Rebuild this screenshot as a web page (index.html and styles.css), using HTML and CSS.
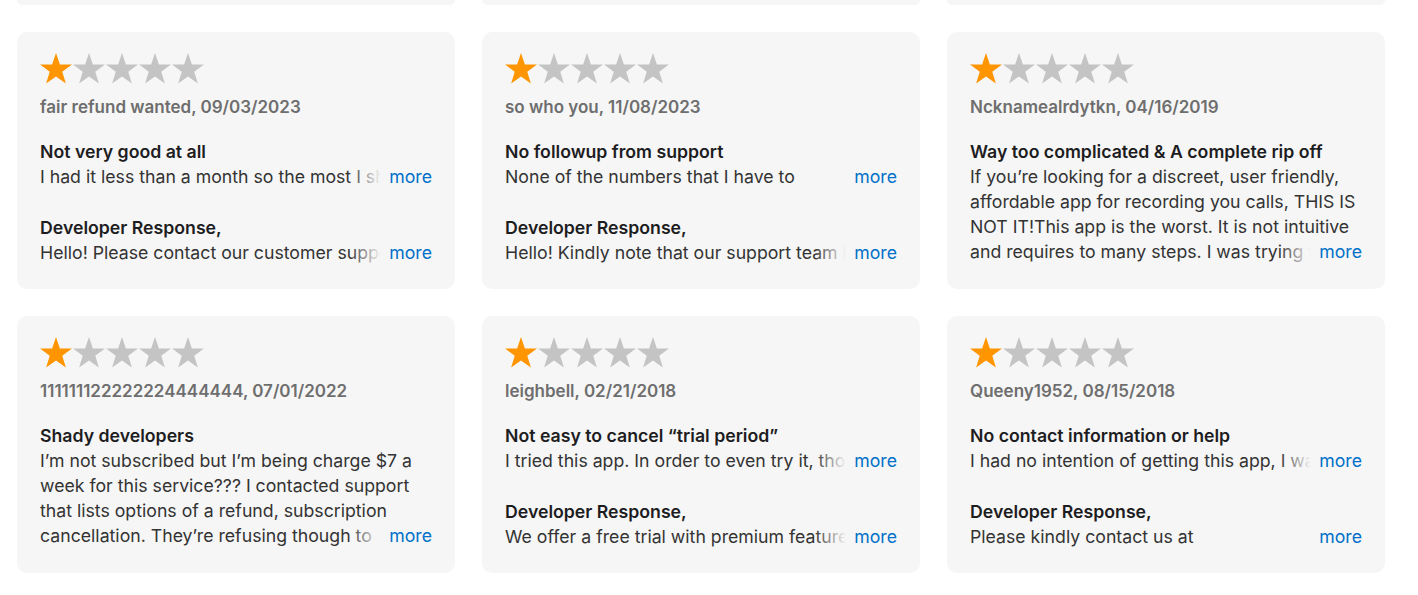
FILE: index.html
```html
<!DOCTYPE html>
<html lang="en">
<head>
<meta charset="utf-8">
<title>Ratings and Reviews</title>
<link rel="stylesheet" href="styles.css">
</head>
<body>
<svg class="defs" width="0" height="0" aria-hidden="true">
  <defs>
    <symbol id="star" viewBox="0 0 32 31">
      <polygon points="16,0 19.88,11.46 31.98,11.61 22.28,18.84 25.87,30.39 16,23.4 6.13,30.39 9.72,18.84 0.02,11.61 12.12,11.46"/>
    </symbol>
  </defs>
</svg>
<main class="reviews">
  <div class="card stub"></div>
  <div class="card stub"></div>
  <div class="card stub"></div>

  <article class="card">
    <svg class="stars" viewBox="0 0 164 31" width="164" height="31"><use href="#star" x="0" width="32" height="31" class="on"/><use href="#star" x="33" width="32" height="31" class="off"/><use href="#star" x="66" width="32" height="31" class="off"/><use href="#star" x="99" width="32" height="31" class="off"/><use href="#star" x="132" width="32" height="31" class="off"/></svg>
    <div class="author">fair refund wanted, 09/03/2023</div>
    <h3 class="title">Not very good at all</h3>
    <div class="clamp one"><p class="text">I had it less than a month so the most I should have been charged was the monthly fee, instead I was charged for the entire year.</p><span class="more">more</span></div>
    <h3 class="dev">Developer Response,</h3>
    <div class="clamp one"><p class="text">Hello! Please contact our customer support team so that we can help you with your refund request.</p><span class="more">more</span></div>
  </article>

  <article class="card">
    <svg class="stars" viewBox="0 0 164 31" width="164" height="31"><use href="#star" x="0" width="32" height="31" class="on"/><use href="#star" x="33" width="32" height="31" class="off"/><use href="#star" x="66" width="32" height="31" class="off"/><use href="#star" x="99" width="32" height="31" class="off"/><use href="#star" x="132" width="32" height="31" class="off"/></svg>
    <div class="author">so who you, 11/08/2023</div>
    <h3 class="title">No followup from support</h3>
    <div class="clamp one"><p class="text">None of the numbers that I have to<br>call work and nobody answers my emails.</p><span class="more">more</span></div>
    <h3 class="dev">Developer Response,</h3>
    <div class="clamp one"><p class="text">Hello! Kindly note that our support team is available via email and will answer you shortly.</p><span class="more">more</span></div>
  </article>

  <article class="card">
    <svg class="stars" viewBox="0 0 164 31" width="164" height="31"><use href="#star" x="0" width="32" height="31" class="on"/><use href="#star" x="33" width="32" height="31" class="off"/><use href="#star" x="66" width="32" height="31" class="off"/><use href="#star" x="99" width="32" height="31" class="off"/><use href="#star" x="132" width="32" height="31" class="off"/></svg>
    <div class="author">Ncknamealrdytkn, 04/16/2019</div>
    <h3 class="title">Way too complicated &amp; A complete rip off</h3>
    <div class="clamp four"><p class="text">If you’re looking for a discreet, user friendly,<br>affordable app for recording you calls, THIS IS<br>NOT IT!This app is the worst. It is not intuitive<br>and requires to many steps. I was trying to record a call and it never worked once.</p><span class="more">more</span></div>
  </article>

  <article class="card">
    <svg class="stars" viewBox="0 0 164 31" width="164" height="31"><use href="#star" x="0" width="32" height="31" class="on"/><use href="#star" x="33" width="32" height="31" class="off"/><use href="#star" x="66" width="32" height="31" class="off"/><use href="#star" x="99" width="32" height="31" class="off"/><use href="#star" x="132" width="32" height="31" class="off"/></svg>
    <div class="author">111111122222224444444, 07/01/2022</div>
    <h3 class="title">Shady developers</h3>
    <div class="clamp four"><p class="text">I’m not subscribed but I’m being charge $7 a<br>week for this service??? I contacted support<br>that lists options of a refund, subscription<br>cancellation. They’re refusing though to cancel anything at all.</p><span class="more">more</span></div>
  </article>

  <article class="card">
    <svg class="stars" viewBox="0 0 164 31" width="164" height="31"><use href="#star" x="0" width="32" height="31" class="on"/><use href="#star" x="33" width="32" height="31" class="off"/><use href="#star" x="66" width="32" height="31" class="off"/><use href="#star" x="99" width="32" height="31" class="off"/><use href="#star" x="132" width="32" height="31" class="off"/></svg>
    <div class="author">leighbell, 02/21/2018</div>
    <h3 class="title">Not easy to cancel “trial period”</h3>
    <div class="clamp one"><p class="text">I tried this app. In order to even try it, though, you have to sign up for the trial.</p><span class="more">more</span></div>
    <h3 class="dev">Developer Response,</h3>
    <div class="clamp one"><p class="text">We offer a free trial with premium features so that you can test the app before paying.</p><span class="more">more</span></div>
  </article>

  <article class="card">
    <svg class="stars" viewBox="0 0 164 31" width="164" height="31"><use href="#star" x="0" width="32" height="31" class="on"/><use href="#star" x="33" width="32" height="31" class="off"/><use href="#star" x="66" width="32" height="31" class="off"/><use href="#star" x="99" width="32" height="31" class="off"/><use href="#star" x="132" width="32" height="31" class="off"/></svg>
    <div class="author">Queeny1952, 08/15/2018</div>
    <h3 class="title">No contact information or help</h3>
    <div class="clamp one"><p class="text">I had no intention of getting this app, I was charged without knowing it.</p><span class="more">more</span></div>
    <h3 class="dev">Developer Response,</h3>
    <div class="clamp one"><p class="text">Please kindly contact us at<br>support@callrecorderapp.com for help.</p><span class="more">more</span></div>
  </article>
</main>
</body>
</html>
```

FILE: styles.css
```css
* { box-sizing: border-box; }

html, body {
  margin: 0;
  padding: 0;
  background: #ffffff;
}

body {
  font-family: Inter, "Noto Sans", "Liberation Sans", sans-serif;
  font-size: 17.7px;
  line-height: 25px;
  color: #333333;
}

.defs {
  position: absolute;
  width: 0;
  height: 0;
  overflow: hidden;
}

.reviews {
  display: grid;
  grid-template-columns: repeat(3, 438px);
  column-gap: 27px;
  row-gap: 27px;
  padding: 0 0 0 17px;
}

.card {
  background: #f6f6f6;
  border-radius: 10px;
  padding: 20px 23px 24px;
}

.card.stub {
  height: 5px;
  padding: 0;
  border-radius: 0 0 10px 10px;
}

.stars {
  display: block;
  width: 164px;
  height: 31px;
  margin-top: 1px;
  margin-bottom: 1px;
}

.stars .on { fill: #ff9500; }
.stars .off { fill: #c4c4c4; }

.author {
  margin-top: 11px;
  font-size: 17px;
  font-weight: 600;
  color: #6e6e6e;
}

.title,
.dev {
  margin: 19px 0 0;
  font-size: 17.7px;
  line-height: 25px;
  font-weight: 600;
  color: #1d1d1f;
}

.dev { margin-top: 26px; }

.clamp {
  position: relative;
  overflow: hidden;
}

.clamp.one { height: 25px; }
.clamp.four { height: 100px; }

.text {
  margin: 0;
}

.more {
  position: absolute;
  right: 0;
  bottom: 0;
  padding-left: 40px;
  color: #0070c9;
  background: linear-gradient(to right, rgba(246, 246, 246, 0) 0, #f6f6f6 32px);
}
```
